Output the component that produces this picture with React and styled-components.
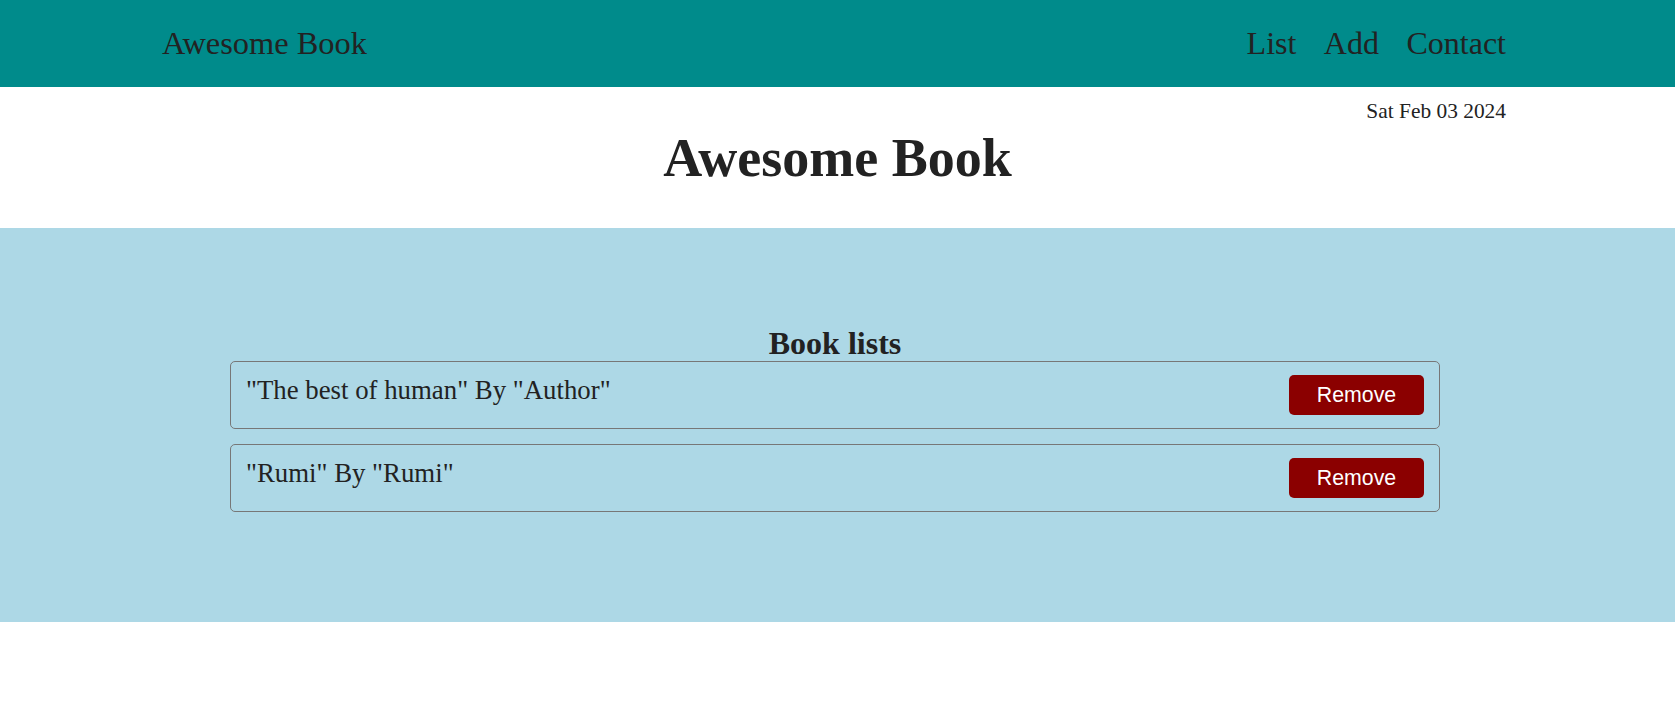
import React from "react";
import styled, { createGlobalStyle } from "styled-components";

const GlobalStyle = createGlobalStyle`
  body {
    margin: 0;
    font-family: "Liberation Serif", "Times New Roman", serif;
    color: #222;
    background-color: #fff;
  }
`;

const Header = styled.header`
  display: flex;
  justify-content: space-between;
  align-items: center;
  height: 87px;
  padding: 0 169px 0 162px;
  background-color: #008b8b;
`;

const Logo = styled.a`
  font-size: 32.4px;
  color: #222;
  text-decoration: none;
`;

const Nav = styled.ul`
  display: flex;
  gap: 27.5px;
  margin: 0;
  padding: 0;
  list-style: none;
`;

const NavLink = styled.a`
  font-size: 32px;
  color: #222;
  text-decoration: none;
  cursor: pointer;
`;

const DateLine = styled.p`
  margin: 14px 0 0;
  padding-right: 169px;
  font-size: 21.4px;
  line-height: 1;
  text-align: right;
`;

const Title = styled.h1`
  margin: 9px 0 43px;
  font-size: 54px;
  line-height: 1;
  text-align: center;
`;

const Section = styled.section`
  padding: 99px 5px 110px 0;
  background-color: #add8e6;
`;

const SectionTitle = styled.h2`
  margin: 0 0 2px;
  font-size: 32px;
  line-height: 1;
  text-align: center;
`;

const List = styled.ul`
  display: flex;
  flex-direction: column;
  gap: 15px;
  width: 1210px;
  margin: 0 auto;
  padding: 0;
  list-style: none;
`;

const Card = styled.li`
  display: flex;
  justify-content: space-between;
  padding: 13px 15px;
  border: 1px solid #777;
  border-radius: 5px;
`;

const BookText = styled.span`
  font-size: 26.8px;
`;

const RemoveButton = styled.button`
  width: 135px;
  height: 40px;
  border: none;
  border-radius: 5px;
  background-color: #8b0000;
  color: #fff;
  font-family: "Liberation Sans", Arial, sans-serif;
  font-size: 21.3px;
  cursor: pointer;
`;

const books = [
  { title: "The best of human", author: "Author" },
  { title: "Rumi", author: "Rumi" },
];

const App = () => {
  return (
    <>
      <GlobalStyle />
      <Header>
        <Logo>Awesome Book</Logo>
        <Nav>
          <li><NavLink>List</NavLink></li>
          <li><NavLink>Add</NavLink></li>
          <li><NavLink>Contact</NavLink></li>
        </Nav>
      </Header>
      <main>
        <DateLine>Sat Feb 03 2024</DateLine>
        <Title>Awesome Book</Title>
        <Section>
          <SectionTitle>Book lists</SectionTitle>
          <List>
            {books.map((book) => (
              <Card key={book.title}>
                <BookText>"{book.title}" By "{book.author}"</BookText>
                <RemoveButton>Remove</RemoveButton>
              </Card>
            ))}
          </List>
        </Section>
      </main>
    </>
  );
};

export default App;
